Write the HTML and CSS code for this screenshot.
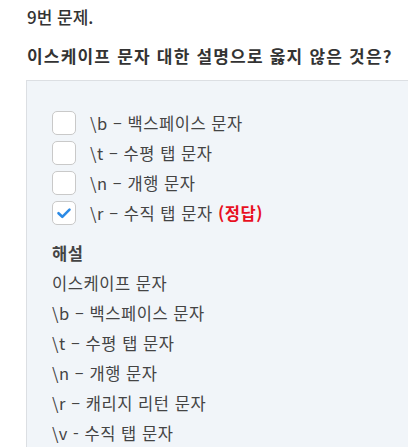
FILE: index.html
```html
<!DOCTYPE html>
<html lang="ko">
<head>
<meta charset="utf-8">
<link rel="stylesheet" href="styles.css">
</head>
<body>
<div class="page">
  <p class="num">9번 문제.</p>
  <p class="question">이스케이프 문자 대한 설명으로 옳지 않은 것은?</p>
  <div class="box">
    <ul class="options">
      <li class="opt"><span class="chk"></span><span>\b – 백스페이스 문자</span></li>
      <li class="opt"><span class="chk"></span><span>\t – 수평 탭 문자</span></li>
      <li class="opt"><span class="chk"></span><span>\n – 개행 문자</span></li>
      <li class="opt"><span class="chk on"><svg viewBox="0 0 24 24" width="24" height="24"><path d="M6.5 12.2 L10.3 15.8 L17.5 8.6" fill="none" stroke="#2b8ae6" stroke-width="2.6" stroke-linecap="round" stroke-linejoin="round"/></svg></span><span>\r – 수직 탭 문자 <b class="ans">(정답)</b></span></li>
    </ul>
    <div class="explain">
      <p class="exh">해설</p>
      <p>이스케이프 문자</p>
      <p>\b – 백스페이스 문자</p>
      <p>\t – 수평 탭 문자</p>
      <p>\n – 개행 문자</p>
      <p>\r – 캐리지 리턴 문자</p>
      <p>\v - 수직 탭 문자</p>
    </div>
  </div>
</div>
</body>
</html>
```
FILE: styles.css
```css
html, body {
  margin: 0;
  padding: 0;
  background: #fff;
  overflow: hidden;
}
body {
  font-family: "Noto Sans CJK KR", "Noto Sans", sans-serif;
  color: #444;
  font-size: 16.5px;
  letter-spacing: 0.55px;
}
.page {
  padding: 5px 0 0 27px;
}
.num {
  margin: 0;
  line-height: 24px;
  font-size: 17px;
  letter-spacing: 0;
  font-weight: 500;
  color: #333;
}
.question {
  margin: 15px 0 0;
  line-height: 24px;
  font-size: 17px;
  letter-spacing: 1.2px;
  font-weight: 700;
  color: #333;
  white-space: nowrap;
}
.box {
  margin: 12px 0 0 -1px;
  width: 420px;
  height: 400px;
  background: #f1f5f9;
  border: 1px solid #dcdfe3;
  padding: 27px 0 0 25px;
}
.options {
  list-style: none;
  margin: 0;
  padding: 0;
}
.opt {
  display: flex;
  align-items: center;
  height: 30px;
}
.chk {
  box-sizing: border-box;
  width: 24px;
  height: 24px;
  border: 1.5px solid #c9c9c9;
  border-radius: 5px;
  background: #fff;
  margin-right: 14px;
  display: flex;
  align-items: center;
  justify-content: center;
}
.chk svg {
  flex: none;
}
.ans {
  color: #e8101f;
  font-weight: 700;
}
.explain {
  margin-top: 10px;
}
.explain p {
  margin: 0;
  line-height: 30px;
}
.exh {
  font-weight: 700;
}
```
